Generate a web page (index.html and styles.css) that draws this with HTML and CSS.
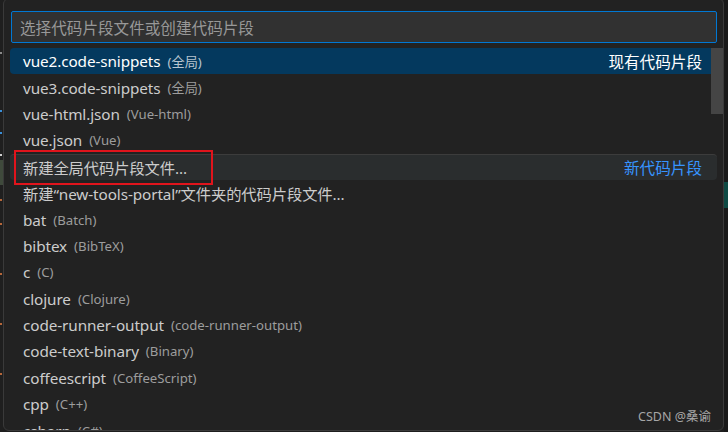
FILE: index.html
```html
<!DOCTYPE html>
<html lang="zh-CN">
<head>
    <meta charset="UTF-8">
    <title>配置用户代码片段</title>
    <link rel="stylesheet" href="styles.css">
</head>
<body>
    <!-- editor visible behind the picker -->
    <div class="edge">
        <div class="edge-bit gray" style="margin-top: 52px"></div>
        <div class="edge-bit blue" style="margin-top: 56px"></div>
        <div class="edge-bit blue" style="margin-top: 20px"></div>
        <div class="edge-bit white" style="margin-top: 20px"></div>
        <div class="edge-block"></div>
        <div class="edge-bit orange" style="margin-top: 14px"></div>
        <div class="edge-bit orange" style="margin-top: 22px"></div>
        <div class="edge-bit orange" style="margin-top: 48px"></div>
        <div class="edge-bit orange" style="margin-top: 48px"></div>
        <div class="edge-bit orange" style="margin-top: 48px"></div>
    </div>

    <!-- Quick pick -->
    <div class="picker">
        <div class="search">
            <span class="placeholder">选择代码片段文件或创建代码片段</span>
        </div>

        <div class="list">
            <div class="row selected">
                <span class="label">vue2.code-snippets</span><span class="desc">(全局)</span>
                <span class="group">现有代码片段</span>
            </div>
            <div class="row"><span class="label">vue3.code-snippets</span><span class="desc">(全局)</span></div>
            <div class="row"><span class="label">vue-html.json</span><span class="desc">(Vue-html)</span></div>
            <div class="row"><span class="label">vue.json</span><span class="desc">(Vue)</span></div>
            <div class="row hovered">
                <span class="label">新建全局代码片段文件...</span>
                <span class="group new">新代码片段</span>
            </div>
            <div class="row"><span class="label">新建“new-tools-portal”文件夹的代码片段文件...</span></div>
            <div class="row"><span class="label">bat</span><span class="desc">(Batch)</span></div>
            <div class="row"><span class="label">bibtex</span><span class="desc">(BibTeX)</span></div>
            <div class="row"><span class="label">c</span><span class="desc">(C)</span></div>
            <div class="row"><span class="label">clojure</span><span class="desc">(Clojure)</span></div>
            <div class="row"><span class="label">code-runner-output</span><span class="desc">(code-runner-output)</span></div>
            <div class="row"><span class="label">code-text-binary</span><span class="desc">(Binary)</span></div>
            <div class="row"><span class="label">coffeescript</span><span class="desc">(CoffeeScript)</span></div>
            <div class="row"><span class="label">cpp</span><span class="desc">(C++)</span></div>
            <div class="row"><span class="label">csharp</span><span class="desc">(C#)</span></div>

            <div class="scrollbar"></div>
            <div class="mark"></div>
        </div>

        <div class="watermark">CSDN @桑谕</div>
    </div>

    <div class="edge right">
        <div class="edge-teal"></div>
    </div>
</body>
</html>
```

FILE: styles.css
```css
body { margin: 0; background: #1e1e1e; display: flex; height: 432px; overflow: hidden; font-family: "Noto Sans", "Noto Sans CJK SC", sans-serif; }

/* strips of editor left and right of the picker */
.edge { width: 3px; flex-shrink: 0; display: flex; flex-direction: column; background: #1f1f1f; }
.edge-bit { height: 2px; width: 2px; flex-shrink: 0; }
.edge-bit.gray { background: #8a8a8a; }
.edge-bit.blue { background: #3a8fd8; }
.edge-bit.white { background: #d0d0d0; }
.edge-bit.orange { background: #b5673a; }
.edge-block { height: 25px; margin-top: 4px; background: #3f4a3c; flex-shrink: 0; }
.edge.right { width: 4px; background: #191919; }
.edge-teal { height: 26px; margin-top: 182px; background: #0f4a44; }

/* Quick pick panel */
.picker {
    position: relative;
    flex-shrink: 0;
    width: 721px; height: 433px;
    margin-top: -2px;
    padding: 12px 0 0 0;
    box-sizing: border-box;
    background: #222222;
    border: 1px solid #3a3a3a;
    border-radius: 6px;
    overflow: hidden;
}

.search {
    margin: 0 6px 0 7px;
    height: 32px;
    box-sizing: border-box;
    border: 1px solid #0078d4;
    border-radius: 2px;
    background: #313131;
    padding-left: 8px;
    display: flex; align-items: center;
}
.placeholder { font-family: "Noto Sans CJK SC", sans-serif; font-size: 15.6px; color: #989898; }

.list { position: relative; margin-top: 5px; }

.row {
    height: 26.4px;
    margin: 0 6px;
    padding: 0 15px 0 13px;
    box-sizing: border-box;
    display: flex; align-items: center;
    border-radius: 4px;
    font-size: 15.3px;
    color: #cccccc;
    white-space: nowrap;
}
.row.selected { background: #04395e; color: #ffffff; }
.row.hovered { background: #2a2d2e; border-top: 1px solid #3c3c3c; }

.label { letter-spacing: -0.1px; }
.desc { margin-left: 7px; font-size: 13.2px; color: #9d9d9d; }
.selected .desc { color: #b7c4cf; }

.group { margin-left: auto; font-family: "Noto Sans CJK SC", sans-serif; font-size: 15.6px; }
.group.new { color: #3794ff; }

/* overlay scroll thumb */
.scrollbar { position: absolute; top: 0; right: 0; width: 12px; height: 66px; background: #454545; }

/* red annotation box */
.mark { position: absolute; top: 102px; left: 10px; width: 199px; height: 35px; box-sizing: border-box; border: 2px solid #e0141c; }

.watermark { position: absolute; right: 12px; bottom: 5px; font-size: 12.5px; color: #a6a6a6; }
```
